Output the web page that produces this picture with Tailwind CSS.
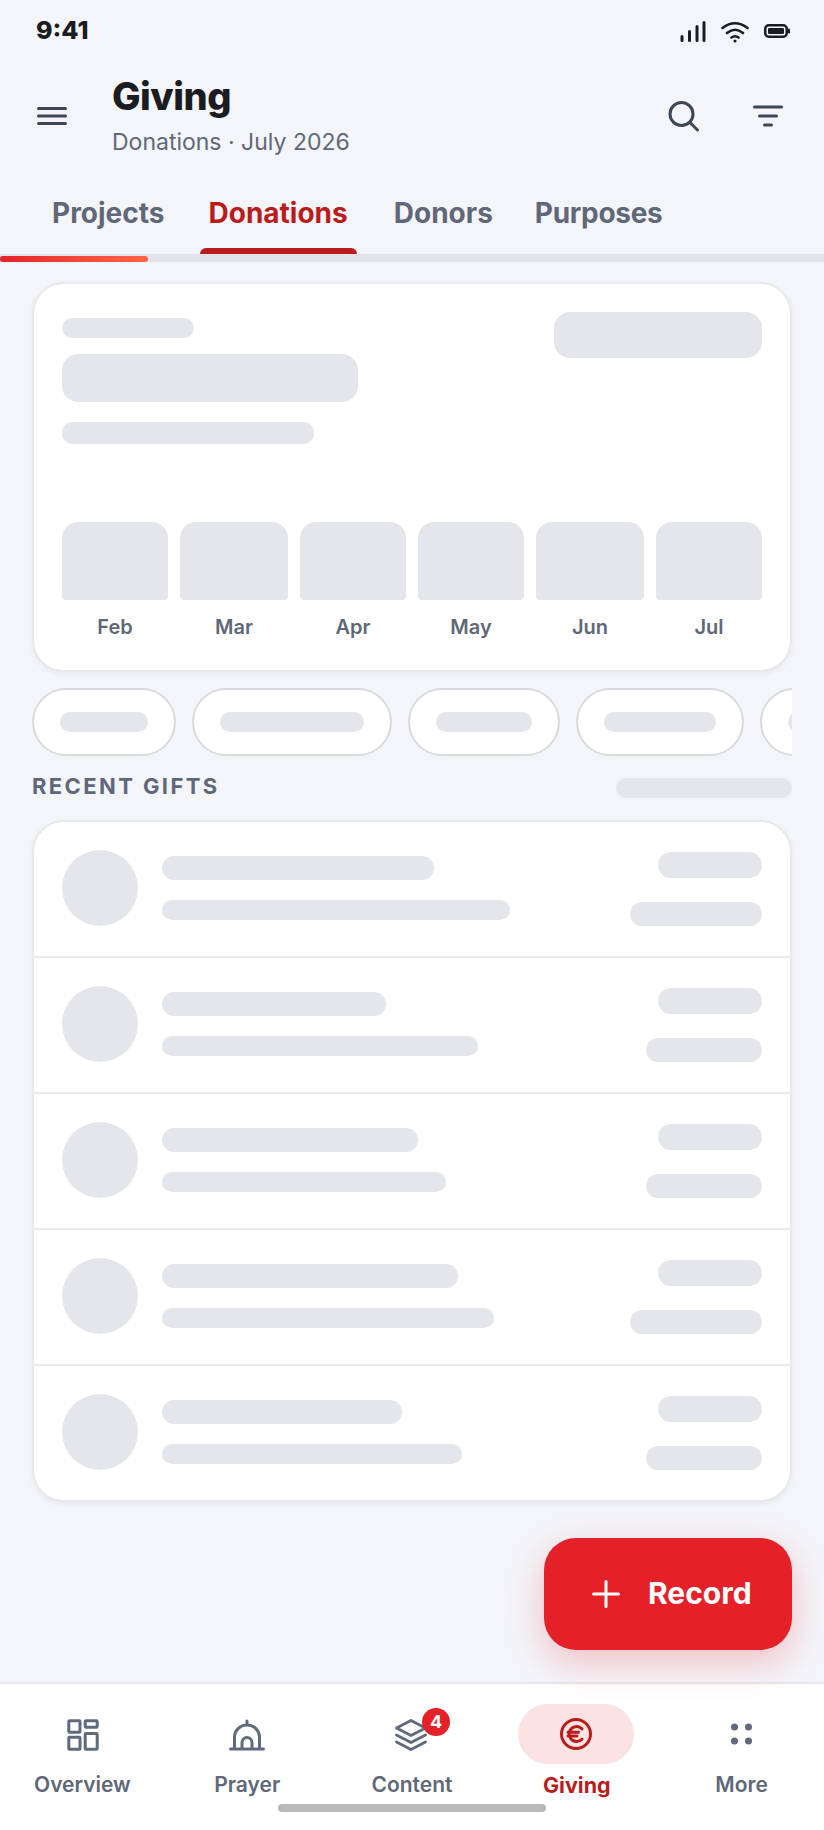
<!DOCTYPE html>
<html lang="en">
<head>
<meta charset="utf8" />
<script src="https://cdn.jsdelivr.net/npm/@tailwindcss/browser@4"></script>
<title>Giving</title>
</head>
<body class="bg-[#f4f5f9] font-['Inter',sans-serif]">
<div class="w-[824px] h-[1830px] flex flex-col overflow-hidden relative">
  <!-- Status bar -->
  <div class="h-[60px] pl-[36px] pr-[34px] flex justify-between items-center shrink-0">
    <span class="text-[25px] font-extrabold text-[#1a1c22] leading-[60px] h-[60px]">9:41</span>
    <div class="flex items-center gap-[15px] pt-[4px]">
      <svg width="26" height="24" viewBox="0 0 26 24" fill="none" stroke="#1a1c22" stroke-width="3" stroke-linecap="round">
        <path d="M2 16.5V20.5M9.5 11.5V20.5M17 6.5V20.5M24 2.5V20.5" />
      </svg>
      <svg width="28" height="24" viewBox="0 0 28 24" fill="none" stroke="#1a1c22" stroke-width="2.6" stroke-linecap="round">
        <path d="M1.5 8Q14 -1.5 26.5 8M6 13Q14 6.5 22 13M10.5 17.5Q14 15 17.5 17.5" />
        <circle cx="14" cy="21" r="1.6" fill="#1a1c22" stroke="none" />
      </svg>
      <svg width="26" height="24" viewBox="0 0 26 24" fill="none">
        <rect x="1.25" y="5.25" width="21.5" height="11.5" rx="3.5" stroke="#1a1c22" stroke-width="2.5" />
        <rect x="4" y="8" width="16" height="6" rx="1" fill="#1a1c22" />
        <rect x="24" y="8.5" width="2" height="5" rx="1" fill="#1a1c22" />
      </svg>
    </div>
  </div>

  <!-- Header -->
  <div class="h-[136px] pt-[14px] pl-[37px] pr-[41px] flex items-start shrink-0">
    <svg class="mt-[33px] mr-[45px]" width="30" height="18" viewBox="0 0 30 18" fill="none" stroke="#3d4656" stroke-width="3" stroke-linecap="round">
      <path d="M1.5 1.5H28.5M1.5 9H28.5M1.5 16.5H28.5" />
    </svg>
    <div class="grow">
      <div class="text-[38px] font-extrabold tracking-[-0.5px] text-[#1a1c22] leading-[44px]">Giving</div>
      <div class="text-[23px] text-[#5f6878] leading-[28px] mt-[10px]">Donations · July 2026</div>
    </div>
    <svg class="mt-[27px] mr-[53px]" width="32" height="32" viewBox="0 0 32 32" fill="none" stroke="#3d4656" stroke-width="3" stroke-linecap="round">
      <circle cx="13.5" cy="13" r="11.5" />
      <path d="M22 21.5L29.5 29" />
    </svg>
    <svg class="mt-[31px]" width="30" height="22" viewBox="0 0 30 22" fill="none" stroke="#3d4656" stroke-width="3" stroke-linecap="round">
      <path d="M1.5 2H28.5M6.5 11H23.5M11.5 20H18.5" />
    </svg>
  </div>

  <!-- Tabs -->
  <div class="flex gap-[25px] pl-[42px] shrink-0">
    <div class="px-[10px] pt-[1px] pb-[25px] text-[28px] leading-[32px] font-bold text-[#5f6878]">Projects</div>
    <div class="relative px-[9px] mr-[2px] pt-[1px] pb-[25px] text-[28px] leading-[32px] font-bold text-[#b91c1c]">
      Donations
      <div class="absolute left-0 right-0 bottom-0 h-[6px] bg-[#b91c1c] rounded-t-[6px]"></div>
    </div>
    <div class="px-[10px] pt-[1px] pb-[25px] text-[28px] leading-[32px] font-bold text-[#5f6878]">Donors</div>
    <div class="-ml-[3px] px-[10px] pt-[1px] pb-[25px] text-[28px] leading-[32px] font-bold tracking-[-0.3px] text-[#5f6878]">Purposes</div>
  </div>
  <div class="h-[8px] pt-[2px] bg-[#e3e4e9] shrink-0">
    <div class="w-[148px] h-[6px] rounded-full bg-gradient-to-r from-[#e42028] to-[#ff6347]"></div>
  </div>

  <main class="grow px-[32px] pt-[20px]">
    <!-- Summary card -->
    <div class="h-[390px] bg-white border-2 border-[#e8e9ed] rounded-[32px] p-[28px] shadow-[0_2px_6px_rgba(0,0,0,0.05)]">
      <div class="flex justify-between items-start h-[180px]">
        <div class="pt-[6px]">
          <div class="w-[132px] h-[20px] rounded-[10px] bg-[#e5e6eb]"></div>
          <div class="w-[296px] h-[48px] rounded-[16px] bg-[#e5e6eb] mt-[16px]"></div>
          <div class="w-[252px] h-[22px] rounded-[11px] bg-[#e5e6eb] mt-[20px]"></div>
        </div>
        <div class="w-[208px] h-[46px] rounded-[16px] bg-[#e5e6eb]"></div>
      </div>
      <div class="grid grid-cols-[106px_108px_106px_106px_108px_106px] gap-[12px] mt-[30px]">
        <div class="text-center"><div class="h-[78px] bg-[#e5e6eb] rounded-t-[16px] rounded-b-[4px]"></div><div class="mt-[13px] text-[20px] leading-[28px] font-semibold text-[#5f6878]">Feb</div></div>
        <div class="text-center"><div class="h-[78px] bg-[#e5e6eb] rounded-t-[16px] rounded-b-[4px]"></div><div class="mt-[13px] text-[20px] leading-[28px] font-semibold text-[#5f6878]">Mar</div></div>
        <div class="text-center"><div class="h-[78px] bg-[#e5e6eb] rounded-t-[16px] rounded-b-[4px]"></div><div class="mt-[13px] text-[20px] leading-[28px] font-semibold text-[#5f6878]">Apr</div></div>
        <div class="text-center"><div class="h-[78px] bg-[#e5e6eb] rounded-t-[16px] rounded-b-[4px]"></div><div class="mt-[13px] text-[20px] leading-[28px] font-semibold text-[#5f6878]">May</div></div>
        <div class="text-center"><div class="h-[78px] bg-[#e5e6eb] rounded-t-[16px] rounded-b-[4px]"></div><div class="mt-[13px] text-[20px] leading-[28px] font-semibold text-[#5f6878]">Jun</div></div>
        <div class="text-center"><div class="h-[78px] bg-[#e5e6eb] rounded-t-[16px] rounded-b-[4px]"></div><div class="mt-[13px] text-[20px] leading-[28px] font-semibold text-[#5f6878]">Jul</div></div>
      </div>
    </div>

    <!-- Filter chips -->
    <div class="flex gap-[16px] mt-[16px] overflow-hidden">
      <div class="shrink-0 h-[68px] px-[26px] bg-white border-2 border-[#d9dadf] rounded-full flex items-center"><div class="w-[88px] h-[20px] rounded-[10px] bg-[#e5e6eb]"></div></div>
      <div class="shrink-0 h-[68px] px-[26px] bg-white border-2 border-[#d9dadf] rounded-full flex items-center"><div class="w-[144px] h-[20px] rounded-[10px] bg-[#e5e6eb]"></div></div>
      <div class="shrink-0 h-[68px] px-[26px] bg-white border-2 border-[#d9dadf] rounded-full flex items-center"><div class="w-[96px] h-[20px] rounded-[10px] bg-[#e5e6eb]"></div></div>
      <div class="shrink-0 h-[68px] px-[26px] bg-white border-2 border-[#d9dadf] rounded-full flex items-center"><div class="w-[112px] h-[20px] rounded-[10px] bg-[#e5e6eb]"></div></div>
      <div class="shrink-0 h-[68px] px-[26px] bg-white border-2 border-[#d9dadf] rounded-full flex items-center"><div class="w-[96px] h-[20px] rounded-[10px] bg-[#e5e6eb]"></div></div>
    </div>

    <!-- Recent gifts -->
    <div class="flex justify-between items-start mt-[22px] h-[20px]">
      <span class="text-[22px] leading-[16px] font-bold tracking-[2.4px] text-[#5f6878]">RECENT GIFTS</span>
      <div class="w-[176px] h-[20px] rounded-[10px] bg-[#e5e6eb]"></div>
    </div>

    <div class="mt-[22px] bg-white border-2 border-[#e8e9ed] rounded-[32px] shadow-[0_2px_6px_rgba(0,0,0,0.05)] overflow-hidden">
      <div class="h-[136px] border-b-2 border-[#e8e9ed] pl-[28px] pr-[28px] pt-[28px] flex">
        <div class="w-[76px] h-[76px] rounded-full bg-[#e5e6eb] shrink-0"></div>
        <div class="ml-[24px] grow pt-[6px]">
          <div class="w-[272px] h-[24px] rounded-[12px] bg-[#e5e6eb]"></div>
          <div class="w-[348px] h-[20px] rounded-[10px] bg-[#e5e6eb] mt-[20px]"></div>
        </div>
        <div class="flex flex-col items-end pt-[2px]">
          <div class="w-[104px] h-[26px] rounded-[13px] bg-[#e5e6eb]"></div>
          <div class="w-[132px] h-[24px] rounded-[12px] bg-[#e5e6eb] mt-[24px]"></div>
        </div>
      </div>
      <div class="h-[136px] border-b-2 border-[#e8e9ed] pl-[28px] pr-[28px] pt-[28px] flex">
        <div class="w-[76px] h-[76px] rounded-full bg-[#e5e6eb] shrink-0"></div>
        <div class="ml-[24px] grow pt-[6px]">
          <div class="w-[224px] h-[24px] rounded-[12px] bg-[#e5e6eb]"></div>
          <div class="w-[316px] h-[20px] rounded-[10px] bg-[#e5e6eb] mt-[20px]"></div>
        </div>
        <div class="flex flex-col items-end pt-[2px]">
          <div class="w-[104px] h-[26px] rounded-[13px] bg-[#e5e6eb]"></div>
          <div class="w-[116px] h-[24px] rounded-[12px] bg-[#e5e6eb] mt-[24px]"></div>
        </div>
      </div>
      <div class="h-[136px] border-b-2 border-[#e8e9ed] pl-[28px] pr-[28px] pt-[28px] flex">
        <div class="w-[76px] h-[76px] rounded-full bg-[#e5e6eb] shrink-0"></div>
        <div class="ml-[24px] grow pt-[6px]">
          <div class="w-[256px] h-[24px] rounded-[12px] bg-[#e5e6eb]"></div>
          <div class="w-[284px] h-[20px] rounded-[10px] bg-[#e5e6eb] mt-[20px]"></div>
        </div>
        <div class="flex flex-col items-end pt-[2px]">
          <div class="w-[104px] h-[26px] rounded-[13px] bg-[#e5e6eb]"></div>
          <div class="w-[116px] h-[24px] rounded-[12px] bg-[#e5e6eb] mt-[24px]"></div>
        </div>
      </div>
      <div class="h-[136px] border-b-2 border-[#e8e9ed] pl-[28px] pr-[28px] pt-[28px] flex">
        <div class="w-[76px] h-[76px] rounded-full bg-[#e5e6eb] shrink-0"></div>
        <div class="ml-[24px] grow pt-[6px]">
          <div class="w-[296px] h-[24px] rounded-[12px] bg-[#e5e6eb]"></div>
          <div class="w-[332px] h-[20px] rounded-[10px] bg-[#e5e6eb] mt-[20px]"></div>
        </div>
        <div class="flex flex-col items-end pt-[2px]">
          <div class="w-[104px] h-[26px] rounded-[13px] bg-[#e5e6eb]"></div>
          <div class="w-[132px] h-[24px] rounded-[12px] bg-[#e5e6eb] mt-[24px]"></div>
        </div>
      </div>
      <div class="h-[134px] pl-[28px] pr-[28px] pt-[28px] flex">
        <div class="w-[76px] h-[76px] rounded-full bg-[#e5e6eb] shrink-0"></div>
        <div class="ml-[24px] grow pt-[6px]">
          <div class="w-[240px] h-[24px] rounded-[12px] bg-[#e5e6eb]"></div>
          <div class="w-[300px] h-[20px] rounded-[10px] bg-[#e5e6eb] mt-[20px]"></div>
        </div>
        <div class="flex flex-col items-end pt-[2px]">
          <div class="w-[104px] h-[26px] rounded-[13px] bg-[#e5e6eb]"></div>
          <div class="w-[116px] h-[24px] rounded-[12px] bg-[#e5e6eb] mt-[24px]"></div>
        </div>
      </div>
    </div>
  </main>

  <!-- Bottom nav -->
  <nav class="h-[148px] bg-white border-t-2 border-[#e5e6ea] shrink-0 grid grid-cols-5 pt-[20px]">
    <div class="flex flex-col items-center">
      <div class="h-[60px] flex items-center justify-center pt-[1px] translate-x-[1px]">
        <svg width="32" height="32" viewBox="0 0 32 32" fill="none" stroke="#5f6b7c" stroke-width="3" stroke-linejoin="round">
          <rect x="1.8" y="1.8" width="11.2" height="11.4" rx="0.8" />
          <rect x="18.2" y="1.8" width="12" height="6.4" rx="0.8" />
          <rect x="1.8" y="18.2" width="11.2" height="12" rx="0.8" />
          <rect x="18.2" y="14.6" width="12" height="15.6" rx="0.8" />
        </svg>
      </div>
      <span class="mt-[7px] text-[21px] leading-[28px] font-semibold text-[#5f6878]">Overview</span>
    </div>
    <div class="flex flex-col items-center">
      <div class="h-[60px] flex items-center justify-center pt-[1px]">
        <svg width="36" height="32" viewBox="0 0 36 32" fill="none" stroke="#5f6b7c" stroke-width="3" stroke-linecap="round">
          <path d="M1.5 30H34.5M5.5 30V18.5A12.5 12.5 0 0 1 30.5 18.5V30M18 2V6M13 30V23.5A5 5 0 0 1 23 23.5V30" />
        </svg>
      </div>
      <span class="mt-[7px] text-[21px] leading-[28px] font-semibold text-[#5f6878]">Prayer</span>
    </div>
    <div class="flex flex-col items-center">
      <div class="h-[60px] flex items-center justify-center pt-[1px]">
        <div class="relative w-[32px] h-[32px] -translate-x-[1px]">
          <svg width="32" height="32" viewBox="0 0 32 32" fill="none" stroke="#5f6b7c" stroke-width="2.8" stroke-linejoin="round" stroke-linecap="round">
            <path d="M16 1.5L30.5 9L16 16.5L1.5 9ZM1.5 16L16 23.5L30.5 16M1.5 23L16 30.5L30.5 23" />
          </svg>
          <div class="absolute left-[27px] -top-[11px] w-[28px] h-[28px] rounded-full bg-[#e42028] text-white text-[18px] font-bold leading-[28px] text-center">4</div>
        </div>
      </div>
      <span class="mt-[7px] text-[21px] leading-[28px] font-semibold text-[#5f6878]">Content</span>
    </div>
    <div class="flex flex-col items-center">
      <div class="h-[60px] w-[116px] rounded-full bg-[#fbe3e4] flex items-center justify-center -translate-x-[1px]">
        <svg width="32" height="32" viewBox="0 0 32 32" fill="none" stroke="#b91c1c" stroke-width="3" stroke-linecap="round">
          <circle cx="16" cy="16" r="14.5" />
          <path d="M22 10.8A7.5 7.5 0 1 0 22 21.2M8 14.3H18.5M8 18H17" />
        </svg>
      </div>
      <span class="mt-[7px] text-[21.5px] leading-[28px] font-bold text-[#b91c1c]">Giving</span>
    </div>
    <div class="flex flex-col items-center">
      <div class="h-[60px] flex items-center justify-center">
        <svg width="22" height="22" viewBox="0 0 22 22" fill="#5f6b7c">
          <circle cx="3.5" cy="4" r="3.5" /><circle cx="17.5" cy="4" r="3.5" />
          <circle cx="3.5" cy="18" r="3.5" /><circle cx="17.5" cy="18" r="3.5" />
        </svg>
      </div>
      <span class="mt-[7px] text-[21px] leading-[28px] font-semibold text-[#5f6878]">More</span>
    </div>
  </nav>

  <!-- Home indicator -->
  <div class="absolute left-[278px] top-[1804px] w-[268px] h-[8px] rounded-full bg-[#b8b9bb]"></div>

  <!-- Record button -->
  <div class="absolute left-[544px] top-[1538px] w-[248px] h-[112px] rounded-[32px] bg-[#e42028] shadow-[0_12px_36px_rgba(228,32,40,0.25)] flex items-center pl-[48px] gap-[28px] text-white">
    <svg width="28" height="28" viewBox="0 0 28 28" fill="none" stroke="white" stroke-width="3" stroke-linecap="round">
      <path d="M14 1.5V26.5M1.5 14H26.5" />
    </svg>
    <span class="text-[30px] font-bold leading-[32px] mb-[2px]">Record</span>
  </div>
</div>
</body>
</html>
